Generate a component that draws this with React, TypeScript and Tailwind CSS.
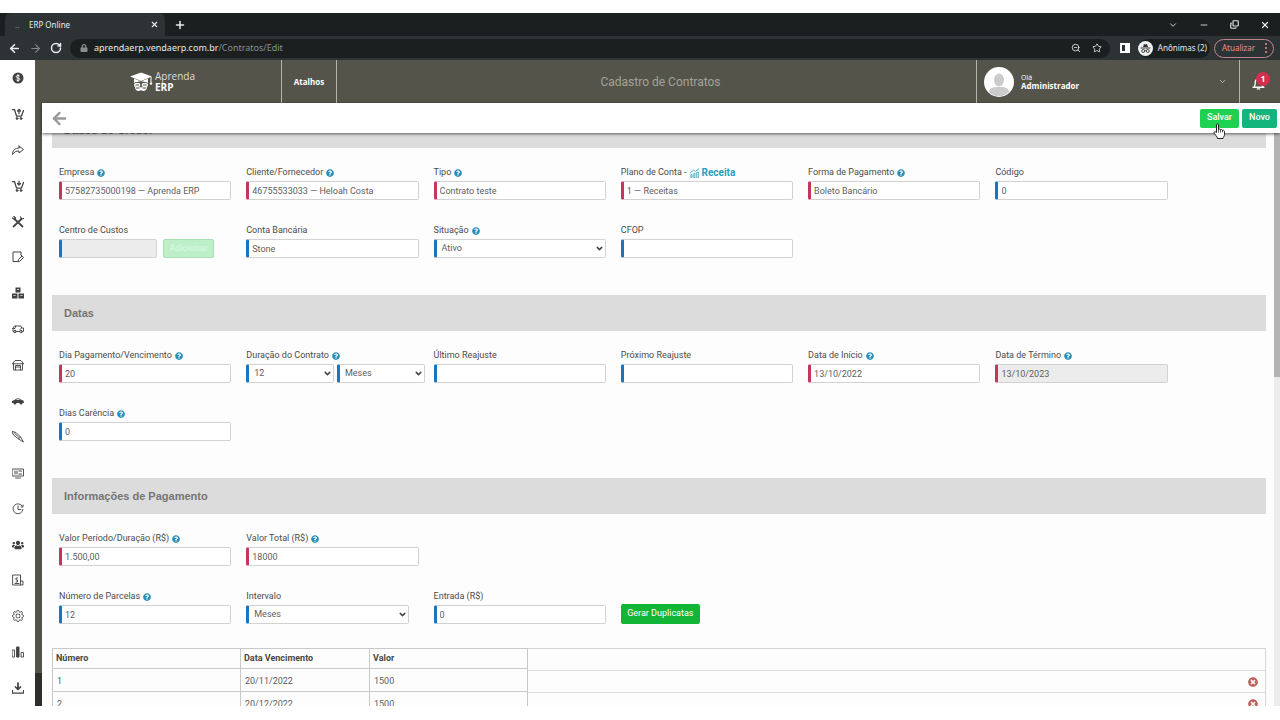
import type { ReactNode } from "react";
import { ArrowLeft, ArrowRight, ChevronDown, Copy, Minus, Plus, RotateCw, Star, X, ZoomOut } from "lucide-react";
import { FaLock, FaQuestionCircle, FaTimesCircle, FaUsers } from "react-icons/fa";
import { BsGear } from "react-icons/bs";

function Icon({ children, size = 12 }: { children: ReactNode; size?: number }) {
  return (
    <svg
      width={size}
      height={size}
      viewBox="0 0 24 24"
      fill="none"
      stroke="currentColor"
      strokeWidth="2"
      strokeLinecap="round"
      strokeLinejoin="round"
      aria-hidden="true"
    >
      {children}
    </svg>
  );
}

function CartIcon({ up }: { up?: boolean }) {
  return (
    <Icon>
      <path d="M1 3h4l4 13h10l4-11" strokeWidth="2.5" />
      <circle cx="10" cy="21" r="1.8" fill="currentColor" />
      <circle cx="18" cy="21" r="1.8" fill="currentColor" />
      <path d={up ? "M14 11V3M11 6l3-3 3 3" : "M14 2v8M11 7l3 3 3-3"} strokeWidth="2.5" />
    </Icon>
  );
}

const menu: { label: string; icon: ReactNode }[] = [
  {
    label: "Financeiro",
    icon: (
      <svg width="12" height="12" viewBox="0 0 24 24" aria-hidden="true">
        <circle cx="12" cy="12" r="11" fill="currentColor" />
        <path
          d="M15.5 8.5c-.6-1.300-2-1.700-3.500-1.700-2 0-3.400.9-3.400 2.500 0 3.600 7 1.800 7 5.300 0 1.700-1.600 2.600-3.600 2.600-1.800 0-3.200-.7-3.700-2.100M12 4.500v15"
          fill="none"
          stroke="#fff"
          strokeWidth="2"
        />
      </svg>
    ),
  },
  { label: "Vendas", icon: <CartIcon up /> },
  {
    label: "Enviar",
    icon: (
      <Icon>
        <path d="M14 4l9 7-9 7v-4C8 14 4 16 1 21c0-8 5-13 13-13z" />
      </Icon>
    ),
  },
  { label: "Compras", icon: <CartIcon /> },
  {
    label: "Serviços",
    icon: (
      <Icon>
        <path d="M3 21L19 6M5 6l16 15" strokeWidth="3.5" />
        <path d="M1 4l4 3 2-3-3-3M23 5l-4 1-2-4" strokeWidth="2.5" />
      </Icon>
    ),
  },
  {
    label: "Contratos",
    icon: (
      <Icon>
        <path d="M18 8V2H2v19h9" />
        <path d="M12 21l1-4 7-7 3 3-7 7z" />
        <path d="M18 8l4 4" />
      </Icon>
    ),
  },
  {
    label: "Estoque",
    icon: (
      <svg width="12" height="12" viewBox="0 0 24 24" fill="currentColor" aria-hidden="true">
        <path d="M7 1h10v10H7zM0 13h11v10H0zM13 13h11v10H13z" />
        <path d="M10 5h4M3 17h4M17 17h4" stroke="#fff" strokeWidth="1.5" />
      </svg>
    ),
  },
  {
    label: "Entregas",
    icon: (
      <Icon>
        <path d="M9 17h6M4 17H2v-4l-1-2 4-5h13l1 4h4v7h-2M7 6l-1 5H2M19 10l-3 3" strokeWidth="1.8" />
        <circle cx="6" cy="17" r="2.5" />
        <circle cx="18" cy="17" r="2.5" />
      </Icon>
    ),
  },
  {
    label: "Loja",
    icon: (
      <Icon>
        <path d="M1 9l5-6h12l5 6zM3 9v13h18V9M7 22v-9h10v9M7 16h10" strokeWidth="1.8" />
      </Icon>
    ),
  },
  {
    label: "Veículos",
    icon: (
      <svg width="12" height="12" viewBox="0 0 24 24" fill="currentColor" aria-hidden="true">
        <path d="M0 12l5-2 4-3h6l4 3 4 1 1 5h-3a3 3 0 0 1-6 0H9a3 3 0 0 1-6 0H0z" />
        <path d="M8 10l2-1.5h4l2 1.5z" fill="#fff" />
      </svg>
    ),
  },
  {
    label: "Produção",
    icon: (
      <Icon>
        <path d="M1 1l7 2 9 9-4 4L3 8zM17 12l6 10-10-6M5 4l9 9" strokeWidth="1.8" />
      </Icon>
    ),
  },
  {
    label: "PDV",
    icon: (
      <Icon>
        <path d="M1 4h22v14H1zM7 22h10" strokeWidth="1.8" />
        <path d="M6 8v6M10 8v6M14 8h5M14 14h5" />
      </Icon>
    ),
  },
  {
    label: "Histórico",
    icon: (
      <Icon>
        <path d="M21 7a10 10 0 1 0 1 6M12 6v7h6M22 4v4h-4" strokeWidth="1.8" />
      </Icon>
    ),
  },
  { label: "Clientes", icon: <FaUsers size={12} /> },
  {
    label: "Notas",
    icon: (
      <Icon>
        <path d="M2 2h15v20H2zM17 14h5v8h-5" strokeWidth="1.8" />
        <path d="M11 8H8v4h3v4H8M6 19h8" strokeWidth="1.8" />
      </Icon>
    ),
  },
  { label: "Configurações", icon: <BsGear size={12} /> },
  {
    label: "Relatórios",
    icon: (
      <Icon>
        <path d="M1 8h4v14H1zM19 13h4v9h-4z" strokeWidth="1.8" />
        <path d="M10 2h4v20h-4z" fill="currentColor" />
      </Icon>
    ),
  },
  {
    label: "Downloads",
    icon: (
      <Icon>
        <path d="M12 2v12M7 10l5 5 5-5" strokeWidth="3.5" />
        <path d="M1 17v5h22v-5" strokeWidth="2.5" />
      </Icon>
    ),
  },
];

const inputBase =
  "block h-[19px] w-full rounded-[2px] border border-l-[3px] border-[#d2d2d2] px-[3px] text-[9px] text-[#5e5e5e] outline-none";
const required = "border-l-[#c4365c]";
const optional = "border-l-[#1a75c0]";

type FieldProps = {
  id: string;
  label: string;
  help?: boolean;
  value?: string;
  req?: boolean;
  disabled?: boolean;
  extra?: ReactNode;
  children?: ReactNode;
};

function Field({ id, label, help, value = "", req, disabled, extra, children }: FieldProps) {
  return (
    <div className="min-w-0">
      <div className="flex h-[17px] items-center gap-[3px] text-[9px] whitespace-nowrap text-[#4c4c4c]">
        <label htmlFor={id}>{label}</label>
        {help && <FaQuestionCircle size={8} className="text-[#2a8fb8]" />}
        {extra}
      </div>
      {children ?? (
        <input
          id={id}
          defaultValue={value}
          disabled={disabled}
          className={`${inputBase} ${req ? required : optional} ${disabled ? "bg-[#ececec]" : "bg-white"}`}
        />
      )}
    </div>
  );
}

function Select({ id, value, label }: { id: string; value: string; label?: string }) {
  return (
    <div className="relative min-w-0 flex-1">
      <select
        id={id}
        aria-label={label}
        defaultValue={value}
        className={`${inputBase} ${optional} appearance-none bg-white pl-[5px]`}
      >
        <option>{value}</option>
      </select>
      <ChevronDown size={9} strokeWidth={4} className="pointer-events-none absolute top-[5px] right-[2px] text-[#444]" />
    </div>
  );
}

function Section({ title, children }: { title: string; children: ReactNode }) {
  return (
    <section>
      <h2 className="flex h-9 items-center bg-[#dcdcdc] px-3 font-['Liberation_Sans',Arial,sans-serif] text-[11px] font-bold text-[#757575]">
        {title}
      </h2>
      <div className="grid w-[91.9%] grid-cols-6 gap-x-[15px] gap-y-[22px] pt-4 pl-[7px]">{children}</div>
    </section>
  );
}

function Browser() {
  return (
    <div className="shrink-0 bg-[#1b1f20] font-['Noto_Sans',sans-serif] text-[#e8eaed]">
      <div className="flex h-[23px] items-center">
        <div className="ml-[5px] flex h-full w-[160px] items-center rounded-t-md bg-[#2d3234] pr-[6px] pl-[10px] text-[8px]">
          <span className="w-[14px] text-[#9a9a9a]">..</span>
          <span className="flex-1">ERP Online</span>
          <button aria-label="Fechar guia">
            <X size={9} strokeWidth={3} />
          </button>
        </div>
        <button aria-label="Nova guia" className="ml-[9px]">
          <Plus size={12} strokeWidth={3} />
        </button>
        <div className="ml-auto flex items-center gap-[21px] pr-[10px]">
          <button aria-label="Guias">
            <ChevronDown size={10} />
          </button>
          <button aria-label="Minimizar">
            <Minus size={10} />
          </button>
          <button aria-label="Restaurar">
            <Copy size={9} strokeWidth={3} className="rotate-180 -scale-x-100" />
          </button>
          <button aria-label="Fechar">
            <X size={10} strokeWidth={3} />
          </button>
        </div>
      </div>
      <div className="flex h-6 items-center bg-[#2d3234] pr-[6px] pl-2">
        <button aria-label="Voltar">
          <ArrowLeft size={13} strokeWidth={3} />
        </button>
        <button aria-label="Avançar" className="ml-2 text-[#858889]">
          <ArrowRight size={13} strokeWidth={2} />
        </button>
        <button aria-label="Recarregar" className="ml-2">
          <RotateCw size={12} strokeWidth={3} />
        </button>
        <div className="ml-2 flex h-[19px] flex-1 items-center rounded-full bg-[#1b1f20] px-2 text-[9px]">
          <FaLock size={8} className="mr-[6px] ml-[2px] text-[#8a8d8e]" />
          <span>aprendaerp.vendaerp.com.br</span>
          <span className="text-[#8c9092]">/Contratos/Edit</span>
          <ZoomOut size={10} className="mr-[11px] ml-auto" />
          <Star size={10} />
        </div>
        <span className="ml-[10px] flex h-[10px] w-[10px] justify-end border-2 border-white">
          <span className="w-[3px] bg-white" />
        </span>
        <div className="ml-2 flex h-[19px] items-center gap-[5px] rounded-full bg-[#1b1f20] pr-[3px] text-[8px]">
          {/* incognito badge */}
          <svg width="15" height="15" viewBox="0 0 30 30" aria-hidden="true">
            <circle cx="15" cy="15" r="15" fill="#f1f1f1" />
            <path d="M10 12l2-6 3 1 3-1 2 6zM5 13h20v2H5z" fill="#333" />
            <g fill="none" stroke="#333" strokeWidth="1.8">
              <circle cx="10.5" cy="20" r="3" />
              <circle cx="19.5" cy="20" r="3" />
              <path d="M13.5 19.5q1.5-1 3 0" />
            </g>
          </svg>
          Anônimas (2)
        </div>
        <button className="ml-1 flex h-[19px] w-[60px] items-center justify-between rounded-full border border-[#c08589] pr-[5px] pl-[7px] text-[8px] text-[#f08f88]">
          Atualizar
          <svg width="4" height="10" viewBox="0 0 4 10" fill="currentColor" aria-hidden="true">
            <circle cx="2" cy="1" r="1" />
            <circle cx="2" cy="5" r="1" />
            <circle cx="2" cy="9" r="1" />
          </svg>
        </button>
      </div>
    </div>
  );
}

function Header() {
  return (
    <header className="flex h-[43px] shrink-0 items-stretch bg-[#54544a] font-['Open_Sans',sans-serif] text-white">
      <div className="flex w-[240px] items-center justify-center gap-[2px] border-r border-[#b5b5ae] pl-[2px]">
        <svg width="23" height="20" viewBox="0 0 46 40" fill="#fff" aria-hidden="true">
          <path d="M0 9L22 1l22 8-22 9z" />
          <path d="M8 13v9c8-4 20-4 28 0v-9l-14 6z" />
          <path d="M41 10h2v10h-2z" />
          <circle cx="42" cy="23" r="2.5" />
          <rect x="8" y="22" width="13" height="8" rx="4" />
          <rect x="23" y="22" width="13" height="8" rx="4" />
          <path d="M10 30h24c0 8-8 10-12 6-4 4-12 2-12-6z" />
          <path d="M11 26h7M26 26h7M12 32h7M25 32h7M22 24v7" stroke="#54544a" strokeWidth="2" />
        </svg>
        <div className="flex flex-col text-[10px] leading-[11px]">
          <span className="text-[#dededa]">Aprenda</span>
          <span className="font-bold">ERP</span>
        </div>
      </div>
      <button className="w-[55px] border-r border-[#b5b5ae] text-[8px] font-bold">Atalhos</button>
      <h1 className="flex flex-1 items-center justify-center pl-2 font-['Roboto',sans-serif] text-[12px] text-[#a3a39c]">
        Cadastro de Contratos
      </h1>
      <button className="flex w-[264px] items-center border-x border-[#b5b5ae] pr-3 pl-[7px] text-left">
        <svg width="30" height="30" viewBox="0 0 30 30" aria-hidden="true">
          <circle cx="15" cy="15" r="15" fill="#fff" />
          <ellipse cx="15" cy="13" rx="5" ry="6.5" fill="#cbcbcb" />
          <path d="M5 25c1-5 5-5 10-5s9 0 10 5a14 14 0 0 1-20 0z" fill="#cbcbcb" />
        </svg>
        <span className="ml-[7px] flex-1 text-[8px] leading-[8px]">
          <span className="block text-[7px]">Olá</span>
          <span className="block font-bold">Administrador</span>
        </span>
        <ChevronDown size={9} className="text-[#d4d4ce]" />
      </button>
      <button aria-label="Notificações" className="relative flex w-10 items-center justify-center pt-1 pr-1">
        <Icon size={13}>
          <path d="M2 19h20M4 18c2-2 2-4 2-8a6 6 0 0 1 12 0c0 4 0 6 2 8M10 22h4" strokeWidth="2.5" />
        </Icon>
        <span className="absolute top-3 right-[10px] flex h-[14px] w-[14px] items-center justify-center rounded-full bg-[#d32f50] text-[8px] font-bold">
          1
        </span>
      </button>
    </header>
  );
}

const installments = [
  { n: 1, date: "20/11/2022", value: "1500" },
  { n: 2, date: "20/12/2022", value: "1500" },
];

function Installments() {
  return (
    <div className="mt-6 flex text-[9px] text-[#5e5e5e]">
      <table className="w-[476px] shrink-0 table-fixed border-separate border-spacing-0 border-t border-l border-[#c9c9c9] text-left">
        <thead>
          <tr className="h-5 text-[#484848]">
            <th className="w-[188px] border-r border-b border-[#c9c9c9] px-[3px] py-0">Número</th>
            <th className="w-[129px] border-r border-b border-[#c9c9c9] px-[3px] py-0">Data Vencimento</th>
            <th className="border-r border-b border-[#c9c9c9] px-[3px] py-0">Valor</th>
          </tr>
        </thead>
        <tbody>
          {installments.map((row) => (
            <tr key={row.n} className="h-[22px]">
              <td className="border-r border-b border-[#c9c9c9] px-1 pt-1">{row.n}</td>
              <td className="border-r border-b border-[#c9c9c9] px-1 pt-1">{row.date}</td>
              <td className="border-r border-b border-[#c9c9c9] px-1 pt-1">{row.value}</td>
            </tr>
          ))}
        </tbody>
      </table>
      <div className="flex-1 border-t border-r border-[#d6d6d6]">
        <div className="h-[22px] border-b border-[#dedede]" />
        {installments.map((row) => (
          <div key={row.n} className="flex h-[22px] items-center justify-end border-b border-[#dedede] pr-[7px]">
            <button aria-label={`Remover parcela ${row.n}`} className="text-[#c0605e]">
              <FaTimesCircle size={10} />
            </button>
          </div>
        ))}
      </div>
    </div>
  );
}

export default function App() {
  return (
    <div className="flex h-screen flex-col overflow-hidden bg-white pt-[13px] pb-[14px] font-['Roboto','Liberation_Sans',sans-serif]">
      <Browser />
      <div className="flex min-h-0 flex-1">
        <nav className="flex w-[35px] shrink-0 flex-col bg-white text-[#424242]">
          {menu.map((item) => (
            <a key={item.label} href="#" aria-label={item.label} className="flex flex-1 items-center justify-center">
              {item.icon}
            </a>
          ))}
        </nav>
        <div className="flex w-[7px] shrink-0 flex-col justify-end bg-[#54544a]">
          <div className="h-[33px] bg-[#2e2e2a]" />
        </div>

        <div className="flex min-w-0 flex-1 flex-col">
          <Header />
          <div className="z-10 flex h-[30px] shrink-0 items-center bg-white pr-[3px] pl-2 shadow-[0_1px_3px_rgba(0,0,0,0.6)]">
            <button aria-label="Voltar" className="text-[#999]">
              <ArrowLeft size={19} strokeWidth={3} />
            </button>
            <div className="ml-auto flex gap-[3px] text-[9px] font-medium text-white">
              <div className="relative">
                <button className="h-[19px] w-[39px] rounded-[2px] bg-[#1fd150]">Salvar</button>
                {/* hand cursor */}
                <svg width="12" height="16" viewBox="0 0 24 32" className="absolute top-[14px] left-[13px]" aria-hidden="true">
                  <path
                    d="M7 19V4c0-3 4-3 4 0v9c1-2 4-1 4 1 1-2 4-1 4 1 1-1 4 0 4 2v6c0 4-3 5-3 8H9c0-4-7-9-7-12 0-2 3-2 5 0z"
                    fill="#fff"
                    stroke="#222"
                    strokeWidth="2"
                  />
                  <path d="M11 13v6M15 14v5M19 15v4" stroke="#222" strokeWidth="1.5" />
                </svg>
              </div>
              <button className="h-[19px] w-[35px] rounded-[2px] bg-[#13b57d]">Novo</button>
            </div>
          </div>

          <div className="flex min-h-0 flex-1 overflow-hidden bg-[#fdfdfd]">
            <main className="-mt-[21px] flex min-w-0 flex-1 flex-col gap-[37px] pr-2 pl-[10px]">
              <Section title="Dados do Credor">
                <Field id="empresa" label="Empresa" help req value="57582735000198 — Aprenda ERP" />
                <Field id="cliente" label="Cliente/Fornecedor" help req value="46755533033 — Heloah Costa" />
                <Field id="tipo" label="Tipo" help req value="Contrato teste" />
                <Field
                  id="plano"
                  label="Plano de Conta -"
                  req
                  value="1 — Receitas"
                  extra={
                    <a href="#" className="flex items-center gap-[2px] text-[10px] font-bold text-[#2b9cba]">
                      <Icon size={10}>
                        <path d="M2 22v-6h3v6zM9 22v-9h3v9zM16 22V10h4v12zM1 11l8-6 4 3 8-6" strokeWidth="1.8" />
                      </Icon>
                      Receita
                    </a>
                  }
                />
                <Field id="forma" label="Forma de Pagamento" help req value="Boleto Bancário" />
                <Field id="codigo" label="Código" value="0" />
                <Field id="centro" label="Centro de Custos">
                  <div className="flex gap-[6px]">
                    <input id="centro" disabled className={`${inputBase} ${optional} max-w-[98px] bg-[#ececec]`} />
                    <button
                      disabled
                      className="h-[19px] w-[51px] shrink-0 rounded-[2px] border border-[#a5dfb2] bg-[#bdf0c8] text-[9px] text-[#dcf8e2]"
                    >
                      Adicionar
                    </button>
                  </div>
                </Field>
                <Field id="conta" label="Conta Bancária" value="Stone" />
                <Field id="situacao" label="Situação" help>
                  <Select id="situacao" value="Ativo" />
                </Field>
                <Field id="cfop" label="CFOP" />
              </Section>

              <Section title="Datas">
                <Field id="dia" label="Dia Pagamento/Vencimento" help req value="20" />
                <Field id="duracao" label="Duração do Contrato" help>
                  <div className="-mr-[6px] flex gap-[3px]">
                    <Select id="duracao" value="12" />
                    <Select id="duracao-unidade" label="Unidade da duração" value="Meses" />
                  </div>
                </Field>
                <Field id="ultimo" label="Último Reajuste" />
                <Field id="proximo" label="Próximo Reajuste" />
                <Field id="inicio" label="Data de Início" help req value="13/10/2022" />
                <Field id="termino" label="Data de Término" help req disabled value="13/10/2023" />
                <Field id="carencia" label="Dias Carência" help value="0" />
              </Section>

              <div>
                <Section title="Informações de Pagamento">
                  <Field id="valor" label="Valor Período/Duração (R$)" help req value="1.500,00" />
                  <div className="col-span-5 grid grid-cols-5 gap-x-[15px]">
                    <Field id="total" label="Valor Total (R$)" help req value="18000" />
                  </div>
                  <Field id="parcelas" label="Número de Parcelas" help value="12" />
                  <Field id="intervalo" label="Intervalo">
                    <div className="flex pr-[10px]">
                      <Select id="intervalo" value="Meses" />
                    </div>
                  </Field>
                  <Field id="entrada" label="Entrada (R$)" value="0" />
                  <div className="flex items-end">
                    <button className="h-5 w-[79px] rounded-[2px] bg-[#12b536] text-[9px] text-white">Gerar Duplicatas</button>
                  </div>
                </Section>
                <Installments />
              </div>
            </main>
            <div className="w-[6px] shrink-0 bg-[#ececec]">
              <div className="h-[244px] bg-[#b4b4b4]" />
            </div>
          </div>
        </div>
      </div>
    </div>
  );
}
